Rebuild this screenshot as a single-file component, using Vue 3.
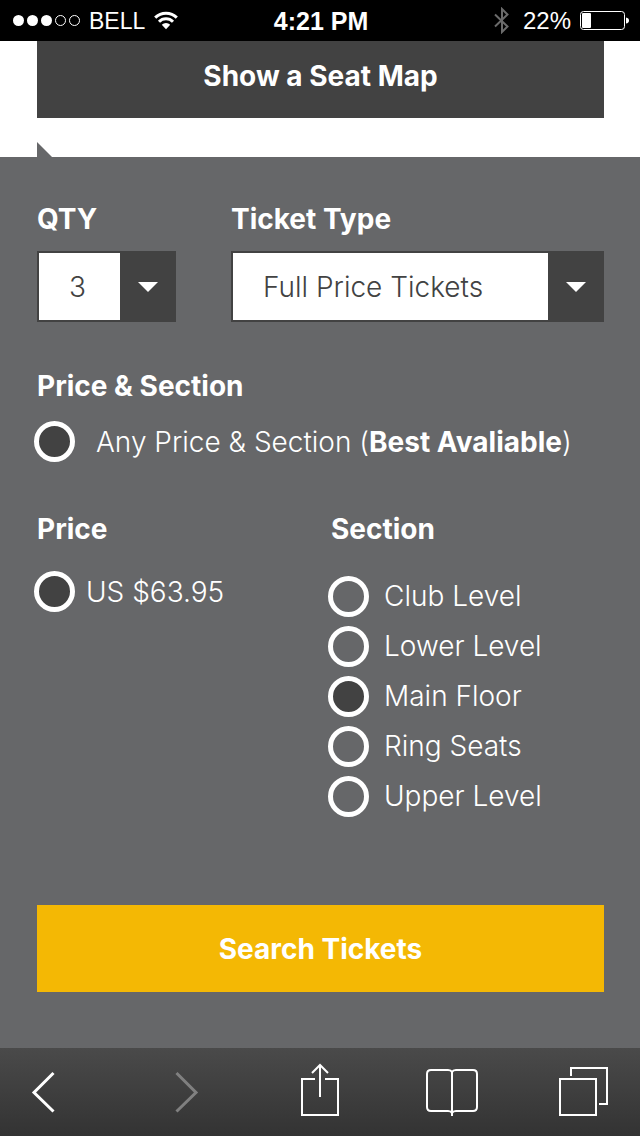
<script setup>
import { ref } from 'vue'

const quantities = [1, 2, 3, 4, 5, 6]
const ticketTypes = ['Full Price Tickets', 'Student Tickets', 'Senior Tickets']
const sections = ['Club Level', 'Lower Level', 'Main Floor', 'Ring Seats', 'Upper Level']

const quantity = ref(3)
const ticketType = ref('Full Price Tickets')
const scope = ref('any')
const price = ref('63.95')
const section = ref('Main Floor')
</script>

<template>
  <div class="screen">
    <header class="status">
      <div class="status-side">
        <svg class="signal" width="67" height="11" viewBox="0 0 67 11" aria-hidden="true">
          <g fill="#fff">
            <circle cx="5.5" cy="5.5" r="5.5" />
            <circle cx="19.5" cy="5.5" r="5.5" />
            <circle cx="33.5" cy="5.5" r="5.5" />
          </g>
          <g fill="none" stroke="#fff">
            <circle cx="47.5" cy="5.5" r="5" />
            <circle cx="61.5" cy="5.5" r="5" />
          </g>
        </svg>
        <span class="carrier">BELL</span>
        <svg width="24" height="19" viewBox="0 0 24 19" aria-hidden="true">
          <g fill="none" stroke="#fff" stroke-width="3">
            <path d="M1.2 6.6a15.3 15.3 0 0 1 21.6 0" />
            <path d="M5 10.7a9.9 9.9 0 0 1 14 0" />
          </g>
          <path d="M7.8 13.7a6 6 0 0 1 8.4 0L12 18.2z" fill="#fff" />
        </svg>
      </div>
      <span class="clock">4:21 PM</span>
      <div class="status-side status-end">
        <svg class="bluetooth" width="15" height="27" viewBox="0 0 15 27" aria-hidden="true">
          <path d="M1 7.5l12.5 12L8 25V2l5.500 5.5L1 19.5" fill="none" stroke="#6b6b6b" stroke-width="2" />
        </svg>
        <span class="charge">22%</span>
        <svg width="49" height="19" viewBox="0 0 49 19" aria-hidden="true">
          <rect x=".5" y=".5" width="44" height="18" rx="3" fill="none" stroke="#fff" />
          <rect x="2" y="2" width="9" height="15" rx="1" fill="#fff" />
          <path d="M46 6.5q3 .5 3 3t-3 3z" fill="#fff" />
        </svg>
      </div>
    </header>

    <section class="map-bar">
      <button type="button" class="action map-button">Show a Seat Map</button>
      <div class="notch"></div>
    </section>

    <form class="panel" @submit.prevent>
      <div class="selectors">
        <div>
          <label class="heading" for="qty">QTY</label>
          <div class="select">
            <select id="qty" v-model="quantity">
              <option v-for="n in quantities" :key="n" :value="n">{{ n }}</option>
            </select>
            <svg width="20" height="10" viewBox="0 0 20 10" aria-hidden="true"><path d="M0 0h20L10 10z" fill="#fff" /></svg>
          </div>
        </div>
        <div>
          <label class="heading" for="type">Ticket Type</label>
          <div class="select">
            <select id="type" v-model="ticketType">
              <option v-for="t in ticketTypes" :key="t">{{ t }}</option>
            </select>
            <svg width="20" height="10" viewBox="0 0 20 10" aria-hidden="true"><path d="M0 0h20L10 10z" fill="#fff" /></svg>
          </div>
        </div>
      </div>

      <fieldset class="scope">
        <legend class="heading">Price &amp; Section</legend>
        <label class="option option-wide">
          <input v-model="scope" type="radio" name="scope" value="any" />
          <span>Any Price &amp; Section (<strong>Best Avaliable</strong>)</span>
        </label>
      </fieldset>

      <div class="filters">
        <fieldset>
          <legend class="heading">Price</legend>
          <label class="option option-price">
            <input v-model="price" type="radio" name="price" value="63.95" />
            <span>US $63.95</span>
          </label>
        </fieldset>
        <fieldset>
          <legend class="heading">Section</legend>
          <label v-for="s in sections" :key="s" class="option option-section">
            <input v-model="section" type="radio" name="section" :value="s" />
            <span>{{ s }}</span>
          </label>
        </fieldset>
      </div>

      <button type="submit" class="action search-button">Search Tickets</button>
    </form>

    <nav class="toolbar">
      <button type="button" aria-label="Back">
        <svg viewBox="0 0 52 54"><path d="M21.5 10L2 29.500l19.500 19" stroke-width="3" /></svg>
      </button>
      <button type="button" aria-label="Forward" disabled>
        <svg viewBox="0 0 52 54"><path d="M13.500 10L33 29.500l-19.500 19" stroke-width="3" /></svg>
      </button>
      <button type="button" aria-label="Share">
        <svg viewBox="0 0 52 54"><path d="M21 16H8v36h36V16H31M26 34V2M18 10l8-8 8 8" stroke-width="2" /></svg>
      </button>
      <button type="button" aria-label="Bookmarks">
        <svg viewBox="0 0 52 54">
          <path d="M27 9q-1-2-4-2H6q-4 0-4 4v33q0 4 4 4h17q3 0 4 2 1-2 4-2h17q4 0 4-4V11q0-4-4-4H31q-3 0-4 2zM27 9v44" stroke-width="2" />
        </svg>
      </button>
      <button type="button" aria-label="Tabs">
        <svg viewBox="0 0 52 54"><path d="M4 16h36v36H4zM15 13V5h36v36h-8" stroke-width="2" /></svg>
      </button>
    </nav>
  </div>
</template>

<style>
body {
  margin: 0;
}
</style>

<style scoped>
.screen {
  display: flex;
  flex-direction: column;
  min-height: 100vh;
  background: #fff;
  color: #fff;
  font: 300 28px/34px Inter, "Open Sans", sans-serif;
}

.status {
  display: grid;
  grid-template-columns: 1fr auto 1fr;
  align-items: center;
  height: 41px;
  padding: 0 11px 0 13px;
  background: #000;
  font-family: "Liberation Sans", Arial, sans-serif;
  font-weight: 400;
}

.status-side {
  display: flex;
  align-items: center;
  gap: 9px;
}

.status-end {
  justify-content: flex-end;
}

.carrier {
  font-size: 23px;
}

.clock {
  font-size: 25px;
  font-weight: 700;
}

.charge {
  margin-left: 5px;
  font-size: 24px;
}

.map-bar {
  padding: 0 36px 0 37px;
}

.action {
  display: block;
  width: 100%;
  padding: 0;
  border: 0;
  color: #fff;
  font: inherit;
  font-weight: 700;
}

.map-button {
  height: 77px;
  padding-bottom: 8px;
  background: #424242;
}

.notch {
  width: 15px;
  height: 15px;
  margin-top: 24px;
  background: #666769;
  clip-path: polygon(0 0, 100% 100%, 0 100%);
}

.panel {
  flex: 1;
  padding: 45px 36px 56px 37px;
  background: #666769;
}

.heading {
  display: block;
  padding: 0;
  font-weight: 700;
}

fieldset {
  min-width: 0;
  margin: 0;
  padding: 0;
  border: 0;
}

.selectors {
  display: grid;
  grid-template-columns: 139px 1fr;
  gap: 55px;
}

.select {
  display: grid;
  grid-template-columns: 1fr 56px;
  align-items: center;
  margin-top: 15px;
  background: #424242;
}

.select select {
  grid-area: 1 / 1 / 2 / 3;
  width: 100%;
  height: 71px;
  padding: 0 56px 0 30px;
  border: 2px solid #424242;
  border-radius: 0;
  appearance: none;
  background: linear-gradient(#424242, #424242) right / 54px 100% no-repeat #fff;
  color: #424242;
  font: inherit;
}

.select svg {
  grid-area: 1 / 2;
  justify-self: center;
  pointer-events: none;
}

.scope {
  margin-top: 47px;
}

.option {
  display: flex;
  align-items: center;
  margin-left: -3px;
}

.option input {
  flex: none;
  width: 41px;
  height: 41px;
  margin: 0;
  border: 5px solid #fff;
  border-radius: 50%;
  appearance: none;
}

.option input:checked {
  background: #424242;
}

.option strong {
  font-weight: 700;
}

.option-wide {
  gap: 21px;
  margin-top: 18px;
}

.option-price {
  gap: 11px;
  margin-top: 25px;
}

.option-section {
  gap: 15px;
  height: 50px;
}

.heading + .option-section {
  margin-top: 25px;
}

.filters {
  display: grid;
  grid-template-columns: 1fr 1fr;
  gap: 21px;
  margin-top: 50px;
}

.search-button {
  height: 87px;
  margin-top: 84px;
  background: #f4b804;
}

.toolbar {
  display: flex;
  justify-content: space-between;
  padding: 15px 32px 19px;
  background: linear-gradient(#4a4a4a, #333);
}

.toolbar button {
  width: 52px;
  height: 54px;
  padding: 0;
  border: 0;
  background: none;
  color: #fff;
}

.toolbar button:disabled {
  color: #808080;
}

.toolbar svg {
  display: block;
  overflow: visible;
  fill: none;
  stroke: currentColor;
}
</style>
